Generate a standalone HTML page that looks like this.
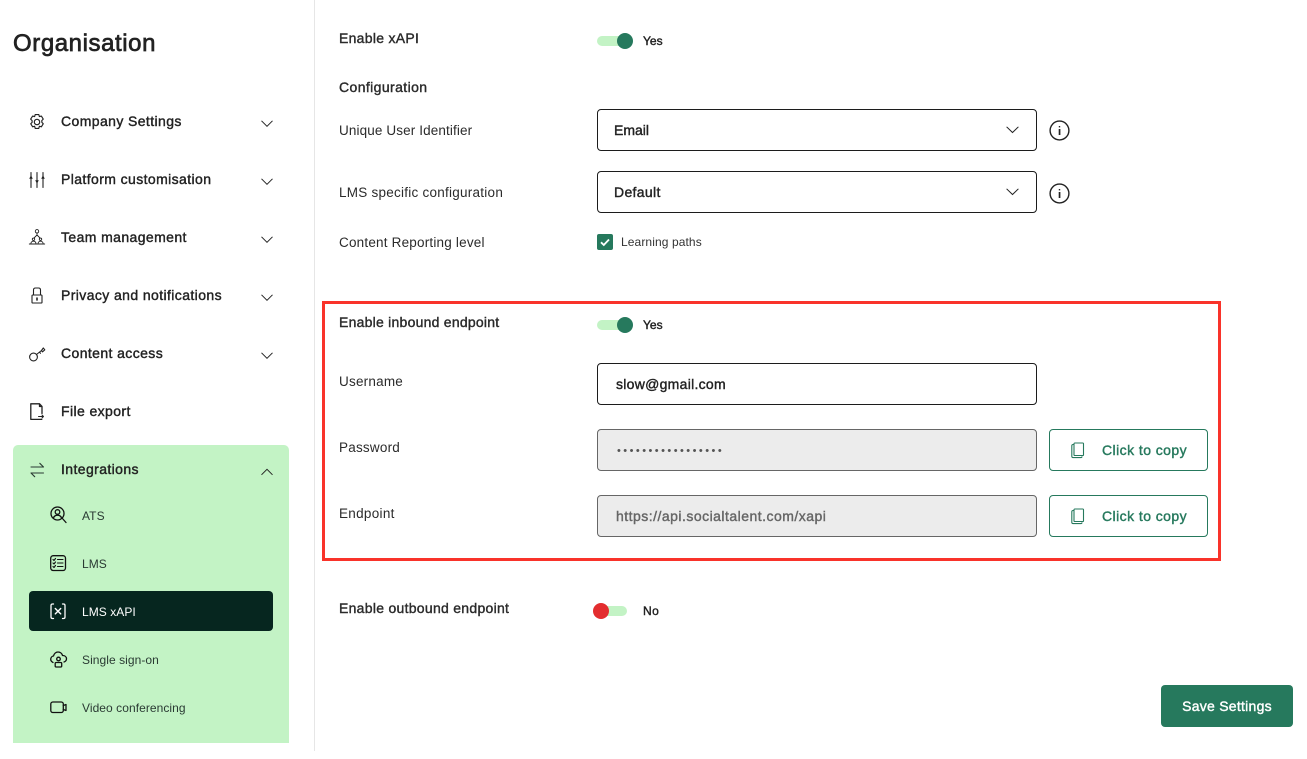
<!DOCTYPE html>
<html><head><meta charset="utf-8">
<style>
html,body{margin:0;padding:0;background:#fff}
#p{position:relative;width:1307px;height:759px;overflow:hidden;background:#fff;font-family:"Liberation Sans",sans-serif;color:#222}
#p div,#p svg{position:absolute}
.t{white-space:nowrap;line-height:20px;height:20px}
.m{-webkit-text-stroke:.4px currentColor}
.n{left:61px;font-size:14px;letter-spacing:.4px;color:#222}
.s{left:82px;font-size:12px;letter-spacing:.06px;color:#2a3a33}
.l{left:339px;font-size:13.5px;color:#2b2b2b;letter-spacing:.22px}
.l.m{font-size:14px;letter-spacing:.28px}
.box{box-sizing:border-box;left:597px;width:440px;height:42px;border-radius:4px;border:1.5px solid #1c1c1c;background:#fff}
.dis{background:#ececec;border:1.5px solid #666}
.btn{box-sizing:border-box;left:1049px;width:159px;height:42px;border-radius:4px;border:1.5px solid #26795d;background:#fff}
.g{color:#26795d}
svg{overflow:visible}
.ic{fill:none;stroke:#222;stroke-width:1.1;stroke-linecap:round;stroke-linejoin:round}
.chev{fill:none;stroke:#222;stroke-width:1}
.sub{stroke:#111;stroke-width:1.3}
</style></head><body><div id="p">

<div style="left:314px;top:0;width:1px;height:751px;background:#e6e6e6"></div>
<div class="t" style="left:13px;top:34px;font-size:24px;line-height:20px;color:#222;letter-spacing:.58px;-webkit-text-stroke:.7px #222">Organisation</div>

<div class="t n m" style="top:111px">Company Settings</div>
<div class="t n m" style="top:169px">Platform customisation</div>
<div class="t n m" style="top:227px">Team management</div>
<div class="t n m" style="top:285px">Privacy and notifications</div>
<div class="t n m" style="top:343px">Content access</div>
<div class="t n m" style="top:401px">File export</div>

<!-- chevrons -->
<svg class="chev" style="left:261px;top:120px" width="12" height="8"><path d="M.5 .8L6 6.300L11.500 .8"/></svg>
<svg class="chev" style="left:261px;top:178px" width="12" height="8"><path d="M.5 .8L6 6.300L11.500 .8"/></svg>
<svg class="chev" style="left:261px;top:236px" width="12" height="8"><path d="M.5 .8L6 6.300L11.500 .8"/></svg>
<svg class="chev" style="left:261px;top:294px" width="12" height="8"><path d="M.5 .8L6 6.300L11.500 .8"/></svg>
<svg class="chev" style="left:261px;top:352px" width="12" height="8"><path d="M.5 .8L6 6.300L11.500 .8"/></svg>

<!-- company icon -->
<svg class="ic" style="left:29px;top:114px" width="16" height="16" viewBox="1.300 .3 13.400 15.400"><path d="M6.300.8h3.400l.6 2 1.900-.5 1.800 2.900-1.400 1.500.1 1.600 1.300 1.400-1.800 2.900-1.900-.5-.6 2.100H6.300l-.6-2.100-1.900.5L2 9.700l1.300-1.400V6.700L1.900 5.200l1.900-2.900 1.900.5z"/><circle cx="8" cy="8" r="2.600"/></svg>
<!-- sliders -->
<svg class="ic" style="left:29px;top:172px" width="16" height="16" viewBox="0 0 16 16"><path d="M2 .5v15M8 .5v15M14 .5v15"/><path style="fill:#222;stroke:none" d="M2 3.200L3.800 6.800H.2zM14 3.200l1.800 3.600h-3.600zM8 11.800L6.200 8.200h3.600z"/></svg>
<!-- team -->
<svg class="ic" style="left:29px;top:229px;stroke-width:.9" width="16" height="17" viewBox="0 0 16 17"><circle cx="8" cy="2.300" r="1.700"/><path d="M8 4v2.500M8 6L5 9M8 6l3 3"/><circle cx="4.500" cy="10.300" r="1.200"/><circle cx="11.500" cy="10.300" r="1.200"/><path d="M.3 15h15.400M1.800 15c0-2 1.400-2.800 2.700-2.800S7 13 7 15M9 15c0-2 1.300-2.800 2.500-2.800s2.700.8 2.700 2.800"/></svg>
<!-- lock -->
<svg class="ic" style="left:30px;top:287px" width="14" height="18" viewBox="0 0 14 18"><path d="M3.500 8V3C3.500 1.800 4.300 1 5.500 1h3c1.200 0 2 .8 2 2V8"/><rect x="2" y="8" width="10" height="8" rx=".8"/><path d="M7 11v2" stroke-width="1.600"/></svg>
<!-- key -->
<svg class="ic" style="left:29px;top:346px" width="17" height="16" viewBox="0 0 17 16"><circle cx="4.500" cy="11" r="3.900"/><path d="M7.500 8.500L12.500 4.500M12.500 4.500l1.800-2.500 1.500 1.800-2.300 2.100-1-1.400M10.500 6.100l1 1.200"/></svg>
<!-- file export -->
<svg class="ic" style="left:30px;top:403px;stroke-width:1.300" width="15" height="17" viewBox="0 0 15 17"><path d="M12 10.500V3.500L9.500 .8H.8v15.600h11M9.500 .8v2.700H12"/><path d="M8.500 13.500h5M12 12l1.500 1.500-1.500 1.500" stroke-width="1"/></svg>

<!-- green panel -->
<div style="left:13px;top:445px;width:276px;height:298px;background:#c3f3c5;border-radius:5px 5px 0 0"></div>
<div style="left:29px;top:591px;width:244px;height:40px;background:#06261f;border-radius:4px"></div>
<div class="t n m" style="top:459px">Integrations</div>
<svg class="chev" style="left:261px;top:468px" width="12" height="8"><path d="M.5 6.800L6 1.300L11.500 6.800"/></svg>
<svg class="ic" style="left:30px;top:462px;stroke:#2a3a33" width="15" height="16" viewBox="0 0 15 16"><path d="M1 5h12.500M9.800 1.300L13.500 5M13.500 11H1M4.700 14.700L1 11"/></svg>

<div class="t s" style="top:506px">ATS</div>
<div class="t s" style="top:554px">LMS</div>
<div class="t s" style="top:602px;color:#fff">LMS xAPI</div>
<div class="t s" style="top:650px">Single sign-on</div>
<div class="t s" style="top:698px">Video conferencing</div>

<svg class="ic sub" style="left:50px;top:506px" width="17" height="18" viewBox="0 0 17 18"><circle cx="7.500" cy="7.500" r="6.500"/><circle cx="7.500" cy="6" r="2.300"/><path d="M3.500 12c.6-2 2.300-2.800 4-2.800s3.400.8 4 2.800M12 12l4 4.500"/></svg>
<svg class="ic sub" style="left:50px;top:555px" width="16" height="17" viewBox="0 0 16 17"><rect x=".7" y=".7" width="14.800" height="14.800" rx="2.500"/><path d="M7.500 4.500H13M7.500 8H13M7.500 11.500H13M3 4.500l1 1 1.500-2M3 8l1 1 1.500-2M3 11.500l1 1 1.500-2" stroke-width="1.100"/></svg>
<svg class="ic sub" style="left:50px;top:603px;stroke:#fff" width="16" height="17" viewBox="0 0 16 17"><path d="M3.500 1H2.500C1.500 1 1 1.700 1 2.500v11.500c0 .8.500 1.500 1.500 1.500h1M12.500 1h1c1 0 1.500.7 1.500 1.500v11.500c0 .8-.5 1.500-1.500 1.500h-1"/><path d="M5.300 5.500l5.400 5.400M10.700 5.500l-5.400 5.400" stroke-width="1.400"/></svg>
<svg class="ic sub" style="left:50px;top:651px" width="17" height="17" viewBox="0 0 17 17"><path d="M3 11.500C1 10.500.5 9 .8 7.500 1.200 6 2.500 5 3.500 5 4 2.500 6 1 8 1c2.300 0 4 1.500 4.500 3.500 2.500 0 4 1.500 4 3.300 0 1.700-1 2.800-2.500 3.200"/><circle cx="8.500" cy="8" r="1.800"/><rect x="5.200" y="11.500" width="6.500" height="4.500" rx="1"/></svg>
<svg class="ic sub" style="left:50px;top:701px" width="17" height="13" viewBox="0 0 17 13"><rect x=".8" y="1" width="12.500" height="10.500" rx="2"/><path d="M13.300 4.500l2.700-1v6l-2.700-1"/></svg>

<!-- main labels -->
<div class="t l m" style="top:28px">Enable xAPI</div>
<div class="t l m" style="top:77px;letter-spacing:.4px">Configuration</div>
<div class="t l" style="top:121px;letter-spacing:.12px">Unique User Identifier</div>
<div class="t l" style="top:183px;letter-spacing:.25px">LMS specific configuration</div>
<div class="t l" style="top:233px;letter-spacing:.2px">Content Reporting level</div>
<div class="t l m" style="top:312px;letter-spacing:.24px">Enable inbound endpoint</div>
<div class="t l" style="top:372px">Username</div>
<div class="t l" style="top:438px">Password</div>
<div class="t l" style="top:504px;letter-spacing:.3px">Endpoint</div>
<div class="t l m" style="top:598px">Enable outbound endpoint</div>

<!-- toggle 1 -->
<div style="left:597px;top:36px;width:30px;height:10px;border-radius:5px;background:#c3f3c5"></div>
<div style="left:617px;top:33px;width:16px;height:16px;border-radius:50%;background:#26795d"></div>
<div class="t m" style="left:643px;top:31px;font-size:12px;color:#222">Yes</div>

<!-- selects -->
<div class="box" style="top:109px"></div>
<div class="t m" style="left:614px;top:120px;font-size:14px;color:#222">Email</div>
<svg class="chev" style="left:1006px;top:126px" width="13" height="8"><path d="M.6 .8L6.500 6.500L12.400 .8"/></svg>
<div class="box" style="top:171px"></div>
<div class="t m" style="left:614px;top:182px;font-size:14px;color:#222;letter-spacing:.33px">Default</div>
<svg class="chev" style="left:1006px;top:188px" width="13" height="8"><path d="M.6 .8L6.500 6.500L12.400 .8"/></svg>

<svg style="left:1049px;top:120px" width="21" height="21" viewBox="0 0 21 21"><circle cx="10.500" cy="10.500" r="9.400" fill="none" stroke="#222" stroke-width="1.400"/><rect x="9.700" y="9" width="1.700" height="6" fill="#222"/><rect x="9.800" y="6" width="1.400" height="1.400" fill="#222"/></svg>
<svg style="left:1049px;top:183px" width="21" height="21" viewBox="0 0 21 21"><circle cx="10.500" cy="10.500" r="9.400" fill="none" stroke="#222" stroke-width="1.400"/><rect x="9.700" y="9" width="1.700" height="6" fill="#222"/><rect x="9.800" y="6" width="1.400" height="1.400" fill="#222"/></svg>

<!-- checkbox -->
<div style="left:597px;top:234px;width:16px;height:16px;border-radius:2px;background:#26795d"></div>
<svg style="left:597px;top:234px" width="16" height="16" viewBox="0 0 16 16"><path d="M4 8.300l2.800 2.700L12 5.500" fill="none" stroke="#fff" stroke-width="1.800"/></svg>
<div class="t" style="left:621px;top:232px;font-size:12px;color:#333;letter-spacing:.1px">Learning paths</div>

<!-- red box -->
<div style="box-sizing:border-box;left:322px;top:301px;width:899px;height:260px;border:3px solid #f9332a"></div>

<!-- toggle 2 -->
<div style="left:597px;top:320px;width:30px;height:10px;border-radius:5px;background:#c3f3c5"></div>
<div style="left:617px;top:317px;width:16px;height:16px;border-radius:50%;background:#26795d"></div>
<div class="t m" style="left:643px;top:315px;font-size:12px;color:#222">Yes</div>

<div class="box" style="top:363px"></div>
<div class="t m" style="left:616px;top:374px;font-size:14px;color:#222;letter-spacing:.28px">slow@gmail.com</div>

<div class="box dis" style="top:429px"></div>
<div class="t" style="left:617px;top:441px;font-size:11px;color:#555;letter-spacing:2.45px">•••••••••••••••••</div>
<div class="box dis" style="top:495px"></div>
<div class="t m" style="left:616px;top:506px;font-size:14px;color:#666;letter-spacing:.48px">https://api.socialtalent.com/xapi</div>

<div class="btn" style="top:429px"></div>
<div class="t m g" style="left:1102px;top:440px;font-size:14px;letter-spacing:.44px">Click to copy</div>
<div class="btn" style="top:495px"></div>
<div class="t m g" style="left:1102px;top:506px;font-size:14px;letter-spacing:.44px">Click to copy</div>

<svg style="left:1071px;top:442px" width="14" height="17" viewBox="0 0 14 17" fill="none" stroke="#26795d" stroke-width="1.100"><rect x="3" y="1" width="9.500" height="12.500" rx=".8"/><path d="M3 2.500H2C1.200 2.500.8 3 .8 3.800v10.500c0 .8.400 1.300 1.200 1.300h8c.8 0 1-.5 1-1.200"/></svg>
<svg style="left:1071px;top:508px" width="14" height="17" viewBox="0 0 14 17" fill="none" stroke="#26795d" stroke-width="1.100"><rect x="3" y="1" width="9.500" height="12.500" rx=".8"/><path d="M3 2.500H2C1.200 2.500.8 3 .8 3.800v10.500c0 .8.400 1.300 1.200 1.300h8c.8 0 1-.5 1-1.200"/></svg>

<!-- toggle 3 -->
<div style="left:597px;top:606px;width:30px;height:10px;border-radius:5px;background:#c3f3c5"></div>
<div style="left:593px;top:603px;width:16px;height:16px;border-radius:50%;background:#e32d2f"></div>
<div class="t m" style="left:643px;top:601px;font-size:12px;color:#222;letter-spacing:.4px">No</div>

<!-- save -->
<div style="left:1161px;top:685px;width:132px;height:42px;border-radius:4px;background:#26795d"></div>
<div class="t m" style="left:1161px;width:132px;text-align:center;top:696px;font-size:14px;color:#fff;letter-spacing:.26px">Save Settings</div>

</div></body></html>
